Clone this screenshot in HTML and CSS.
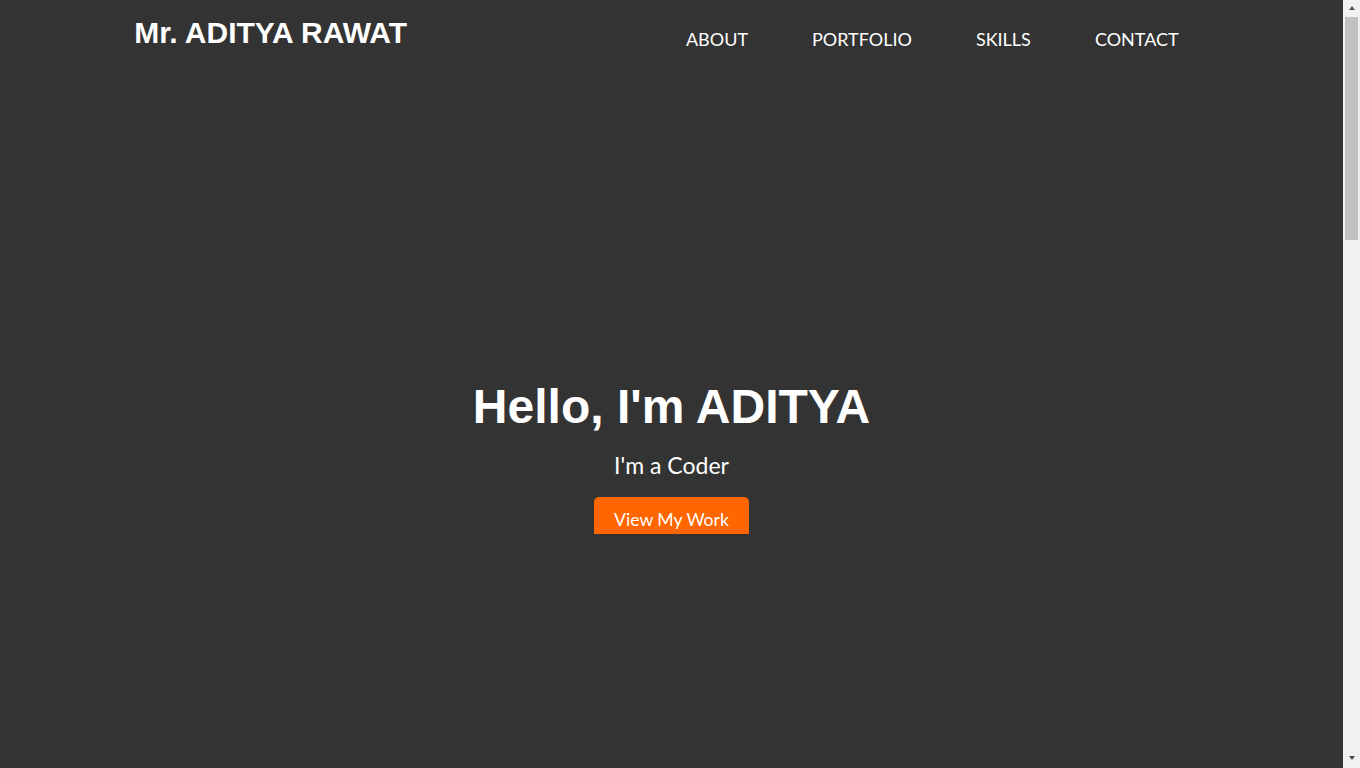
FILE: index.html
```html
<!DOCTYPE html>
<html lang="en">
<head>
<meta charset="utf-8">
<title>Mr. ADITYA RAWAT</title>
<link rel="stylesheet" href="styles.css">
</head>
<body>
<div class="page">
  <header class="site-header">
    <h1 class="brand">Mr. ADITYA RAWAT</h1>
    <nav class="nav">
      <ul class="nav-list">
        <li class="nav-item"><a class="nav-link" href="#about">ABOUT</a></li>
        <li class="nav-item"><a class="nav-link" href="#portfolio">PORTFOLIO</a></li>
        <li class="nav-item"><a class="nav-link" href="#skills">SKILLS</a></li>
        <li class="nav-item"><a class="nav-link" href="#contact">CONTACT</a></li>
      </ul>
    </nav>
  </header>
  <section class="hero">
    <h2 class="hero-title">Hello, I'm ADITYA</h2>
    <p class="hero-sub">I'm a Coder</p>
    <a class="hero-btn" href="#portfolio">View My Work</a>
  </section>
  <main class="sections">
    <section class="section" id="about"></section>
    <section class="section" id="portfolio"></section>
    <section class="section" id="skills"></section>
    <section class="section" id="contact"></section>
  </main>
</div>
<div class="scrollbar" aria-hidden="true">
  <div class="sb-btn"><span class="sb-arrow sb-up"></span></div>
  <div class="sb-track"><div class="sb-thumb"></div></div>
  <div class="sb-btn sb-btn-down"><span class="sb-arrow sb-down"></span></div>
</div>
</body>
</html>
```
FILE: styles.css
```css
html, body {
  margin: 0;
  padding: 0;
}
html {
  scrollbar-width: none;
}
::-webkit-scrollbar {
  display: none;
}
body {
  background: #333333;
  color: #ffffff;
  font-family: Lato, "Open Sans", sans-serif;
}
.page {
  margin-right: 17px;
}
.site-header {
  width: 80%;
  margin: 0 auto;
  display: flex;
  justify-content: space-between;
  align-items: flex-start;
}
.brand {
  font-family: "Liberation Sans", Arial, sans-serif;
  font-weight: bold;
  font-size: 30px;
  line-height: 34px;
  margin: 16px 0 17px 0;
}
.nav-list {
  list-style: none;
  margin: 29px -2px 0 0;
  padding: 0;
  display: flex;
}
.nav-link {
  display: block;
  padding: 0 32px;
  color: #ffffff;
  text-decoration: none;
  font-size: 18px;
  line-height: 21.6px;
}
.hero {
  box-sizing: border-box;
  height: 467px;
  padding-top: 312px;
  overflow: hidden;
  display: flex;
  flex-direction: column;
  align-items: center;
}
.hero-title {
  font-family: "Liberation Sans", Arial, sans-serif;
  font-weight: bold;
  font-size: 48px;
  margin: 0;
  line-height: 55px;
}
.hero-sub {
  font-size: 23px;
  line-height: 26px;
  margin: 18px 0 19px;
}
.hero-btn {
  display: block;
  background: #ff6600;
  color: #ffffff;
  text-decoration: none;
  font-size: 17.6px;
  line-height: 21px;
  padding: 12px 20px 11px;
  border-radius: 5px;
}
.section {
  height: 496px;
}

/* window scrollbar */
.scrollbar {
  position: fixed;
  top: 0;
  right: 0;
  width: 17px;
  height: 100vh;
  background: #f1f1f1;
  display: flex;
  flex-direction: column;
}
.sb-btn {
  height: 17px;
  flex: none;
  display: flex;
  justify-content: center;
  align-items: flex-start;
}
.sb-arrow {
  width: 0;
  height: 0;
  border-left: 3.5px solid transparent;
  border-right: 3.5px solid transparent;
}
.sb-up {
  margin-top: 6px;
  border-bottom: 4px solid #505050;
}
.sb-down {
  margin-top: 5px;
  border-top: 4px solid #505050;
}
.sb-track {
  flex: 1;
}
.sb-thumb {
  height: 223px;
  margin: 0 2px;
  background: #c1c1c1;
}
```
